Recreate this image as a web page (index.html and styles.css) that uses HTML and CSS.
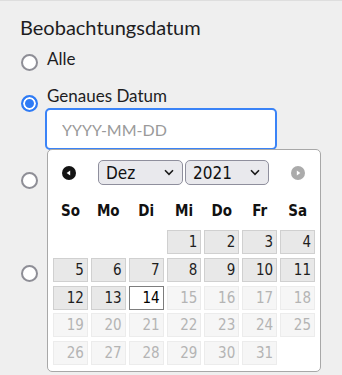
FILE: index.html
```html
<!DOCTYPE html>
<html>
<head>
    <meta name="viewport" content="width=device-width, initial-scale=1" />
    <title>Beobachtungsdatum</title>
    <link rel="stylesheet" href="styles.css">
</head>

<body>

<div class="filter">
    <h2 class="filter-title">Beobachtungsdatum</h2>

    <div class="option">
        <input type="radio" id="datum-alle" name="datum" class="radio">
        <div class="option-body">
            <label for="datum-alle" class="option-label">Alle</label>
        </div>
    </div>

    <div class="option option-field">
        <input type="radio" id="datum-genau" name="datum" class="radio" checked>
        <div class="option-body">
            <label for="datum-genau" class="option-label">Genaues Datum</label>
            <div class="date-field">
                <input type="text" class="date-input" placeholder="YYYY-MM-DD">

                <div class="datepicker">
                    <div class="dp-header">
                        <a class="dp-nav" title="Zurück">
                            <svg width="16" height="16" viewBox="0 0 16 16">
                                <circle cx="8" cy="8" r="7" fill="#141414"/>
                                <polygon points="5.6,8 9.2,5.4 9.2,10.6" fill="#fff"/>
                            </svg>
                        </a>
                        <div class="dp-selects">
                            <div class="dp-select dp-month">
                                <span>Dez</span>
                                <svg width="10" height="7" viewBox="0 0 10 7"><path d="M1 1.3l4 4 4-4" fill="none" stroke="#1a1a1a" stroke-width="1.6"/></svg>
                            </div>
                            <div class="dp-select dp-year">
                                <span>2021</span>
                                <svg width="10" height="7" viewBox="0 0 10 7"><path d="M1 1.3l4 4 4-4" fill="none" stroke="#1a1a1a" stroke-width="1.6"/></svg>
                            </div>
                        </div>
                        <a class="dp-nav dp-disabled" title="Weiter">
                            <svg width="16" height="16" viewBox="0 0 16 16">
                                <circle cx="8" cy="8" r="7" fill="#ababab"/>
                                <polygon points="10.4,8 6.8,5.4 6.8,10.6" fill="#fff"/>
                            </svg>
                        </a>
                    </div>

                    <div class="dp-week">
                        <span>So</span><span>Mo</span><span>Di</span><span>Mi</span><span>Do</span><span>Fr</span><span>Sa</span>
                    </div>

                    <div class="dp-days">
                        <span></span><span></span><span></span>
                        <a class="day">1</a><a class="day">2</a><a class="day">3</a><a class="day">4</a>
                        <a class="day">5</a><a class="day">6</a><a class="day">7</a><a class="day">8</a><a class="day">9</a><a class="day">10</a><a class="day">11</a>
                        <a class="day">12</a><a class="day">13</a><a class="day day-today">14</a><span class="day day-off">15</span><span class="day day-off">16</span><span class="day day-off">17</span><span class="day day-off">18</span>
                        <span class="day day-off">19</span><span class="day day-off">20</span><span class="day day-off">21</span><span class="day day-off">22</span><span class="day day-off">23</span><span class="day day-off">24</span><span class="day day-off">25</span>
                        <span class="day day-off">26</span><span class="day day-off">27</span><span class="day day-off">28</span><span class="day day-off">29</span><span class="day day-off">30</span><span class="day day-off">31</span>
                    </div>
                </div>
            </div>
        </div>
    </div>

    <!-- date range, covered by the open calendar -->
    <div class="option option-field">
        <input type="radio" id="datum-zeitraum" name="datum" class="radio" aria-label="Zeitraum">
        <div class="option-body">
            <input type="text" class="date-input" aria-label="von">
            <input type="text" class="date-input range-end" aria-label="bis">
        </div>
    </div>

    <div class="option">
        <input type="radio" id="datum-jahr" name="datum" class="radio" aria-label="Jahr">
        <div class="option-body">
            <input type="text" class="date-input" aria-label="Jahr">
        </div>
    </div>
</div>

</body>
</html>
```

FILE: styles.css
```css
html {
    background-color: #efefef;
}

body {
    margin: 0;
    padding: 0;
    min-height: 100vh;
    box-sizing: border-box;
    background-color: #efefef;
    border-top: 1px solid #dedede;
    color: #1d1d1f;
    font-family: Lato, "Open Sans", sans-serif;
}

.filter {
    padding: 14px 20px 0 20px;
}

.filter-title {
    margin: 0;
    font-size: 20px;
    line-height: 24px;
    font-weight: 400;
}

.option {
    display: flex;
    align-items: flex-start;
    margin-top: 15px;
}

.filter-title + .option {
    margin-top: 10px;
}

.radio {
    appearance: none;
    -webkit-appearance: none;
    flex: none;
    width: 17px;
    height: 17px;
    margin: 5px 9px 0 1px;
    border: 2px solid #8e8e96;
    border-radius: 50%;
    background-color: #fff;
    box-sizing: border-box;
}

.option-field .radio {
    margin-top: 9px;
}

.radio:checked {
    border-color: #2f7bf5;
    background-color: #2f7bf5;
    box-shadow: inset 0 0 0 2px #fff;
}

.option-body {
    display: flex;
    flex-direction: column;
    align-items: flex-start;
}

.option-label {
    font-size: 17px;
    line-height: 20px;
}

.date-field {
    position: relative;
    margin-top: 4px;
}

.date-input {
    display: block;
    width: 228px;
    height: 38px;
    padding: 0 15px;
    box-sizing: border-box;
    border: 0;
    border-radius: 3px;
    background-color: #fff;
    font-family: Lato, sans-serif;
    font-size: 16px;
    color: #222;
}

.range-end {
    margin-top: 6px;
}

.date-field .date-input {
    outline: 2px solid #3a83f7;
}

.date-input::placeholder {
    color: #9a9a9a;
}

/* popup calendar */
.datepicker {
    position: absolute;
    top: calc(100% + 1px);
    left: 0;
    z-index: 10;
    width: 274px;
    box-sizing: border-box;
    padding: 10px 5px 6px 5px;
    background-color: #fff;
    border: 1px solid #a8a8a8;
    border-radius: 5px;
    font-family: "Liberation Sans Narrow", "DejaVu Sans Condensed", sans-serif;
    color: #111;
}

.dp-header {
    display: flex;
    align-items: center;
    justify-content: space-between;
    height: 25px;
    padding: 0 9px 0 8px;
}

.dp-nav {
    display: flex;
    cursor: pointer;
}

.dp-disabled {
    cursor: default;
}

.dp-selects {
    display: flex;
    gap: 2px;
}

.dp-select {
    display: flex;
    align-items: center;
    justify-content: space-between;
    height: 25px;
    padding: 0 8px 0 7px;
    box-sizing: border-box;
    background-color: #e9e9ed;
    border: 1px solid #8f8f9d;
    border-radius: 5px;
    font-size: 17px;
}

.dp-month {
    width: 85px;
}

.dp-year {
    width: 84px;
}

.dp-week,
.dp-days {
    display: grid;
    grid-template-columns: repeat(7, 1fr);
    column-gap: 3px;
}

.dp-week {
    margin-top: 13px;
    line-height: 26px;
    text-align: center;
    font-size: 15px;
    font-weight: bold;
}

.dp-days {
    margin-top: 6px;
    row-gap: 3.8px;
}

.day {
    display: block;
    height: 24px;
    padding-right: 3px;
    box-sizing: border-box;
    border: 1px solid #d0d0d0;
    background-color: #e8e8e8;
    text-align: right;
    font-size: 15px;
    line-height: 22px;
    color: #1e1e1e;
    cursor: pointer;
}

.day-today {
    background-color: #fff;
    border-color: #7d7d7d;
    color: #000;
}

.day-off {
    background-color: #f6f6f6;
    border-color: #ececec;
    color: #b4b4b4;
    cursor: default;
}
```
